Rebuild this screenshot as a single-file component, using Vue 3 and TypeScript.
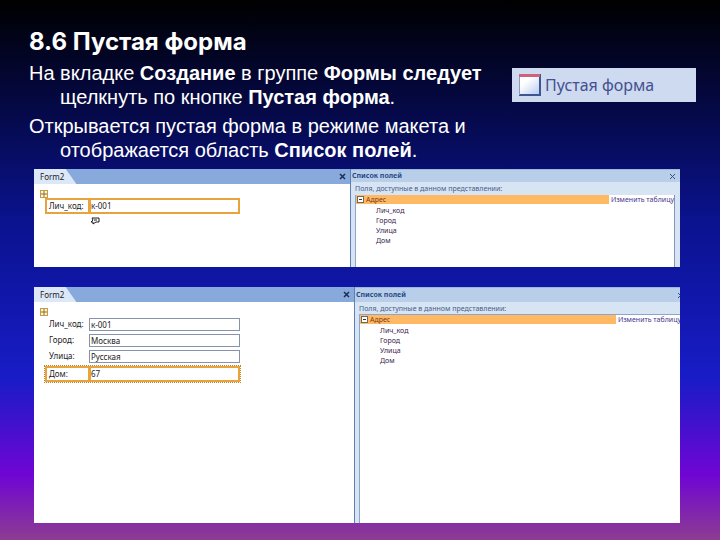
<script setup lang="ts">
import { ref } from 'vue'

interface Field {
  id: string
  label: string
  value: string
  active: boolean
}

interface FormView {
  id: string
  fields: Field[]
  compact: boolean
}

const columns: string[] = ['Лич_код', 'Город', 'Улица', 'Дом']

const views = ref<FormView[]>([
  {
    id: 'first',
    compact: true,
    fields: [{ id: 'code', label: 'Лич_код:', value: 'к-001', active: true }],
  },
  {
    id: 'second',
    compact: false,
    fields: [
      { id: 'code', label: 'Лич_код:', value: 'к-001', active: false },
      { id: 'city', label: 'Город:', value: 'Москва', active: false },
      { id: 'street', label: 'Улица:', value: 'Русская', active: false },
      { id: 'house', label: 'Дом:', value: '67', active: true },
    ],
  },
])
</script>

<template>
  <main class="slide">
    <header class="intro">
      <div class="copy">
        <h1>8.6 Пустая форма</h1>
        <p>На вкладке <b>Создание</b> в группе <b>Формы следует</b> щелкнуть по кнопке <b>Пустая форма</b>.</p>
        <p>Открывается пустая форма в режиме макета и отображается область <b>Список полей</b>.</p>
      </div>
      <button type="button" class="blank-form">
        <svg width="24" height="24" viewBox="0 0 24 24" aria-hidden="true">
          <defs>
            <linearGradient id="sheet" x1="0" y1="0" x2="1" y2="1">
              <stop offset="0.3" stop-color="#ffffff" />
              <stop offset="1" stop-color="#b9cdf0" />
            </linearGradient>
          </defs>
          <rect x="1" y="1" width="22" height="22" fill="#3d5590" />
          <rect x="1" y="4" width="20" height="17" fill="url(#sheet)" />
          <rect x="1" y="1" width="21" height="3" fill="#d0607c" />
          <path d="M1.500 4V22" stroke="#8c9cc0" />
        </svg>
        <span>Пустая форма</span>
      </button>
    </header>

    <section v-for="view in views" :key="view.id" class="window" :class="view.compact ? 'compact' : 'tall'">
      <div class="form-pane">
        <div class="tab-bar">
          <span class="tab">Form2</span>
          <button type="button" class="close" aria-label="Закрыть">
            <svg width="7" height="7" viewBox="0 0 7 7"><path d="M1 1L6 6M6 1L1 6" stroke="#1d2c50" stroke-width="1.500" /></svg>
          </button>
        </div>
        <div class="form-body">
          <svg class="handle" width="8" height="8" viewBox="0 0 8 8" aria-hidden="true">
            <rect x="0.500" y="0.500" width="7" height="7" fill="#fff6d8" stroke="#c99a45" />
            <path d="M4 1V7M1 4H7" stroke="#8d6a2c" />
          </svg>
          <div class="fields">
            <div v-for="field in view.fields" :key="field.id" class="field" :class="{ active: field.active }">
              <label :for="view.id + '-' + field.id">{{ field.label }}</label>
              <input :id="view.id + '-' + field.id" v-model="field.value" type="text" />
            </div>
          </div>
          <svg v-if="view.compact" class="smart-tag" width="10" height="8" viewBox="0 0 10 8" aria-hidden="true">
            <path d="M2 1H9V5H6L3 7V5H1L3 3Z" fill="#fff" stroke="#1c1c1c" />
            <path d="M4 3H7" stroke="#1c1c1c" />
          </svg>
        </div>
      </div>

      <aside class="list-pane">
        <div class="list-head">
          <h2>Список полей</h2>
          <button type="button" class="close" aria-label="Закрыть список">
            <svg width="7" height="7" viewBox="0 0 7 7"><path d="M1 1L6 6M6 1L1 6" stroke="#35507f" /></svg>
          </button>
        </div>
        <p class="hint">Поля, доступные в данном представлении:</p>
        <div class="tree">
          <div class="node">
            <div class="node-name">
              <svg width="7" height="7" viewBox="0 0 7 7" aria-hidden="true">
                <rect x="0.500" y="0.500" width="6" height="6" fill="#fff" stroke="#6d6a60" />
                <path d="M2 3.500H5" stroke="#333" />
              </svg>
              <span>Адрес</span>
            </div>
            <a href="#">Изменить таблицу</a>
          </div>
          <ul>
            <li v-for="column in columns" :key="column">{{ column }}</li>
          </ul>
        </div>
      </aside>
    </section>
  </main>
</template>

<style>
body {
  margin: 0;
}
</style>

<style scoped>
.slide {
  box-sizing: border-box;
  min-height: 100vh;
  padding: 28px 24px 17px 29px;
  display: flex;
  flex-direction: column;
  font-family: "Liberation Sans", Arial, sans-serif;
  color: #fff;
  background: linear-gradient(#000 0%, #0a128c 40%, #181cc7 70%, #7005d4 88%, #8c3d91 100%);
}

.intro {
  display: flex;
  justify-content: space-between;
  align-items: flex-start;
}

.copy {
  flex: 0 1 470px;
}

h1 {
  margin: 0 0 5px;
  font: bold 24px/28px "Century Gothic", Inter, sans-serif;
}

.copy p {
  margin: 0 0 5px;
  padding-left: 31px;
  text-indent: -31px;
  font-size: 20px;
  line-height: 24px;
}

.blank-form {
  display: flex;
  align-items: center;
  gap: 3px;
  width: 184px;
  height: 34px;
  margin-top: 40px;
  padding: 0 6px;
  border: 0;
  background: #cddaf0;
  color: #44508f;
  font: 16px/20px "Noto Sans", sans-serif;
}

.window {
  display: grid;
  margin: 0 16px 0 5px;
  background: #fff;
  color: #222;
  font: 8px/10px "Noto Sans", sans-serif;
}

.compact {
  grid-template-columns: 316px 1fr;
  min-height: 98px;
  margin-top: 2px;
  margin-bottom: 20px;
}

.tall {
  grid-template-columns: 320px 1fr;
  flex: 1;
}

.tab-bar {
  display: flex;
  justify-content: space-between;
  align-items: center;
  height: 15px;
  padding-right: 4px;
  background: #88a9dc;
}

.tab {
  align-self: stretch;
  padding: 0 12px 0 6px;
  font-size: 8px;
  line-height: 15px;
  background: #dce8f8;
  clip-path: polygon(0 0, 75% 0, 100% 100%, 0 100%);
}

.close {
  display: flex;
  padding: 0;
  border: 0;
  background: none;
}

.form-body {
  padding: 6px;
}

.handle {
  display: block;
}

.fields {
  display: grid;
  width: 195px;
  margin-left: 5px;
}

.field {
  display: grid;
  grid-template-columns: 44px 1fr;
  align-items: stretch;
  height: 16px;
}

.field label {
  padding-left: 4px;
  line-height: 12px;
}

.field input {
  box-sizing: border-box;
  min-width: 0;
  height: 13px;
  margin: 0;
  padding: 0 1px;
  border: 1px solid #8793ad;
  border-radius: 0;
  background: #fff;
  color: #222;
  font: inherit;
}

.field.active label {
  height: 12px;
  border: 2px solid #e8a33d;
  border-right-width: 1px;
  padding-left: 2px;
}

.field.active input {
  height: 16px;
  padding: 0 0 1px;
  border: 2px solid #e8a33d;
}

.tall .fields {
  padding-top: 2px;
}

.tall .field.active {
  outline: 1px dotted #b98732;
}

.smart-tag {
  display: block;
  margin: 3px 0 0 50px;
}

.list-pane {
  display: flex;
  flex-direction: column;
  min-width: 0;
  padding: 0 5px 0 4px;
  border-left: 1px solid #5f80b4;
  background: #d7e4f3;
}

.tall .list-pane {
  padding-right: 0;
}

.list-head {
  display: flex;
  justify-content: space-between;
  align-items: center;
  height: 13px;
  margin: 0 -5px 0 -4px;
  padding: 0 4px 0 1px;
  border-top: 1px solid #9db8dd;
  box-sizing: border-box;
  background: #b9cfe9;
}

.tall .list-head {
  height: 15px;
  margin-right: 0;
  padding-right: 0;
  overflow: hidden;
}

.tall .list-head .close {
  margin-right: -4px;
}

h2 {
  margin: 0;
  color: #254a86;
  font: bold 7px/10px "Noto Sans", sans-serif;
}

.hint {
  margin: 0;
  height: 13px;
  color: #44608c;
  font-size: 7px;
  line-height: 13px;
  white-space: nowrap;
}

.tall .hint {
  height: 12px;
}

.tree {
  flex: 1;
  overflow: hidden;
  border-top: 1px solid #8da5c9;
  border-left: 1px solid #8da5c9;
  background: #fff;
  font-size: 7px;
}

.compact .tree {
  border-right: 1px solid #8195b5;
  border-top: 0;
}

.node {
  display: flex;
  height: 9px;
  line-height: 9px;
}

.node-name {
  flex: 1;
  display: flex;
  align-items: center;
  gap: 2px;
  padding-left: 1px;
  background: #ffb964;
  color: #7b3c18;
}

.node a {
  padding-left: 2px;
  color: #47358c;
  text-decoration: none;
  white-space: nowrap;
}

.tall .node a {
  margin-right: -1px;
}

ul {
  margin: 2px 0 0;
  padding: 0 0 0 20px;
  list-style: none;
}

li {
  line-height: 10px;
  color: #3a2350;
}
</style>
